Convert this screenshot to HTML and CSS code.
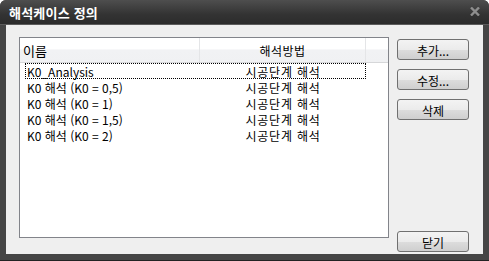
FILE: index.html
```html
<!DOCTYPE html>
<html lang="ko">
<head>
  <meta charset="UTF-8">
  <title>해석케이스 정의</title>
  <link rel="stylesheet" href="styles.css">
</head>
<body>
  <div class="window">
    <div class="titlebar">
      <span class="title">해석케이스 정의</span>
      <svg class="close" width="10" height="9" viewBox="0 0 10 9">
        <path d="M1 0.5 L9 8.5 M9 0.5 L1 8.5" stroke="#8e8e8e" stroke-width="2.4" fill="none"/>
      </svg>
    </div>
    <div class="content">
      <div class="listbox">
        <div class="list-header">
          <div class="col-name">이름</div>
          <div class="col-method">해석방법</div>
          <div class="col-fill"></div>
        </div>
        <div class="rows">
          <div class="row focused">
            <div class="col-name">K0_Analysis</div>
            <div class="col-method">시공단계 해석</div>
          </div>
          <div class="row">
            <div class="col-name">K0 해석 (K0 = 0,5)</div>
            <div class="col-method">시공단계 해석</div>
          </div>
          <div class="row">
            <div class="col-name">K0 해석 (K0 = 1)</div>
            <div class="col-method">시공단계 해석</div>
          </div>
          <div class="row">
            <div class="col-name">K0 해석 (K0 = 1,5)</div>
            <div class="col-method">시공단계 해석</div>
          </div>
          <div class="row">
            <div class="col-name">K0 해석 (K0 = 2)</div>
            <div class="col-method">시공단계 해석</div>
          </div>
        </div>
      </div>
      <div class="buttons">
        <button>추가...</button>
        <button>수정...</button>
        <button>삭제</button>
        <button class="close-btn">닫기</button>
      </div>
    </div>
  </div>
</body>
</html>
```
FILE: styles.css
```css
body {
  margin: 0;
  background-color: #fff;
  font-family: "Noto Sans CJK KR", "DejaVu Sans", sans-serif;
  font-size: 12px;
  color: #000;
}
.window {
  width: 489px;
  height: 261px;
  box-sizing: border-box;
  background-color: #454545;
  border-radius: 6px 6px 0 0;
  border-bottom: 1px solid #222;
  display: flex;
  flex-direction: column;
}
.titlebar {
  height: 24px;
  display: flex;
  align-items: center;
  justify-content: space-between;
  padding: 0 9px 0 9px;
  background: linear-gradient(#4e4e4e, #333 60%, #2c2c2c);
  border-radius: 6px 6px 0 0;
  border-bottom: 1px solid #5c5c5c;
}
.title {
  color: #fff;
  font-size: 13px;
  font-weight: bold;
  letter-spacing: 0.2px;
}
.close {
  margin-top: -1px;
}
.content {
  flex: 1;
  margin: 0 6px 6px 6px;
  background-color: #efefef;
  display: flex;
  padding: 12px 14px 0 13px;
}
.listbox {
  width: 370px;
  height: 201px;
  box-sizing: border-box;
  border: 1px solid #82848a;
  background-color: #fff;
}
.list-header {
  display: flex;
  height: 24px;
  background: linear-gradient(#fff 45%, #f1f2f4 50%, #f0f1f3);
  border-bottom: 1px solid #d6d7d9;
}
.list-header .col-name {
  width: 180px;
  padding-left: 3px;
  line-height: 25px;
  box-sizing: border-box;
  border-right: 1px solid #e4e5e7;
  font-size: 13px;
}
.list-header .col-method {
  width: 166px;
  text-align: center;
  line-height: 25px;
  box-sizing: border-box;
  border-right: 1px solid #e4e5e7;
  letter-spacing: 0.5px;
}
.list-header .col-fill {
  flex: 1;
}
.rows {
  padding-left: 5px;
}
.row {
  display: flex;
  width: 341px;
  height: 16px;
  box-sizing: border-box;
  line-height: 17px;
}
.row.focused {
  border: 1px dotted #000;
  line-height: 15px;
}
.row .col-name {
  width: 175px;
  padding-left: 2px;
  box-sizing: border-box;
}
.row.focused .col-name {
  padding-left: 1px;
}
.row .col-method {
  flex: 1;
  text-align: center;
  letter-spacing: 0.8px;
}
.buttons {
  flex: 1;
  display: flex;
  flex-direction: column;
  align-items: flex-end;
  padding-top: 2px;
}
button {
  width: 72px;
  height: 21px;
  margin-bottom: 9px;
  padding: 1px 0 0 0;
  font-family: "Noto Sans CJK KR", "DejaVu Sans", sans-serif;
  font-size: 12px;
  color: #000;
  border: 1px solid #707070;
  border-radius: 3px;
  background: linear-gradient(#f3f3f3, #ebebeb 50%, #dddddd 51%, #cfcfcf);
}
.close-btn {
  margin-top: auto;
  margin-bottom: 2px;
}
```
